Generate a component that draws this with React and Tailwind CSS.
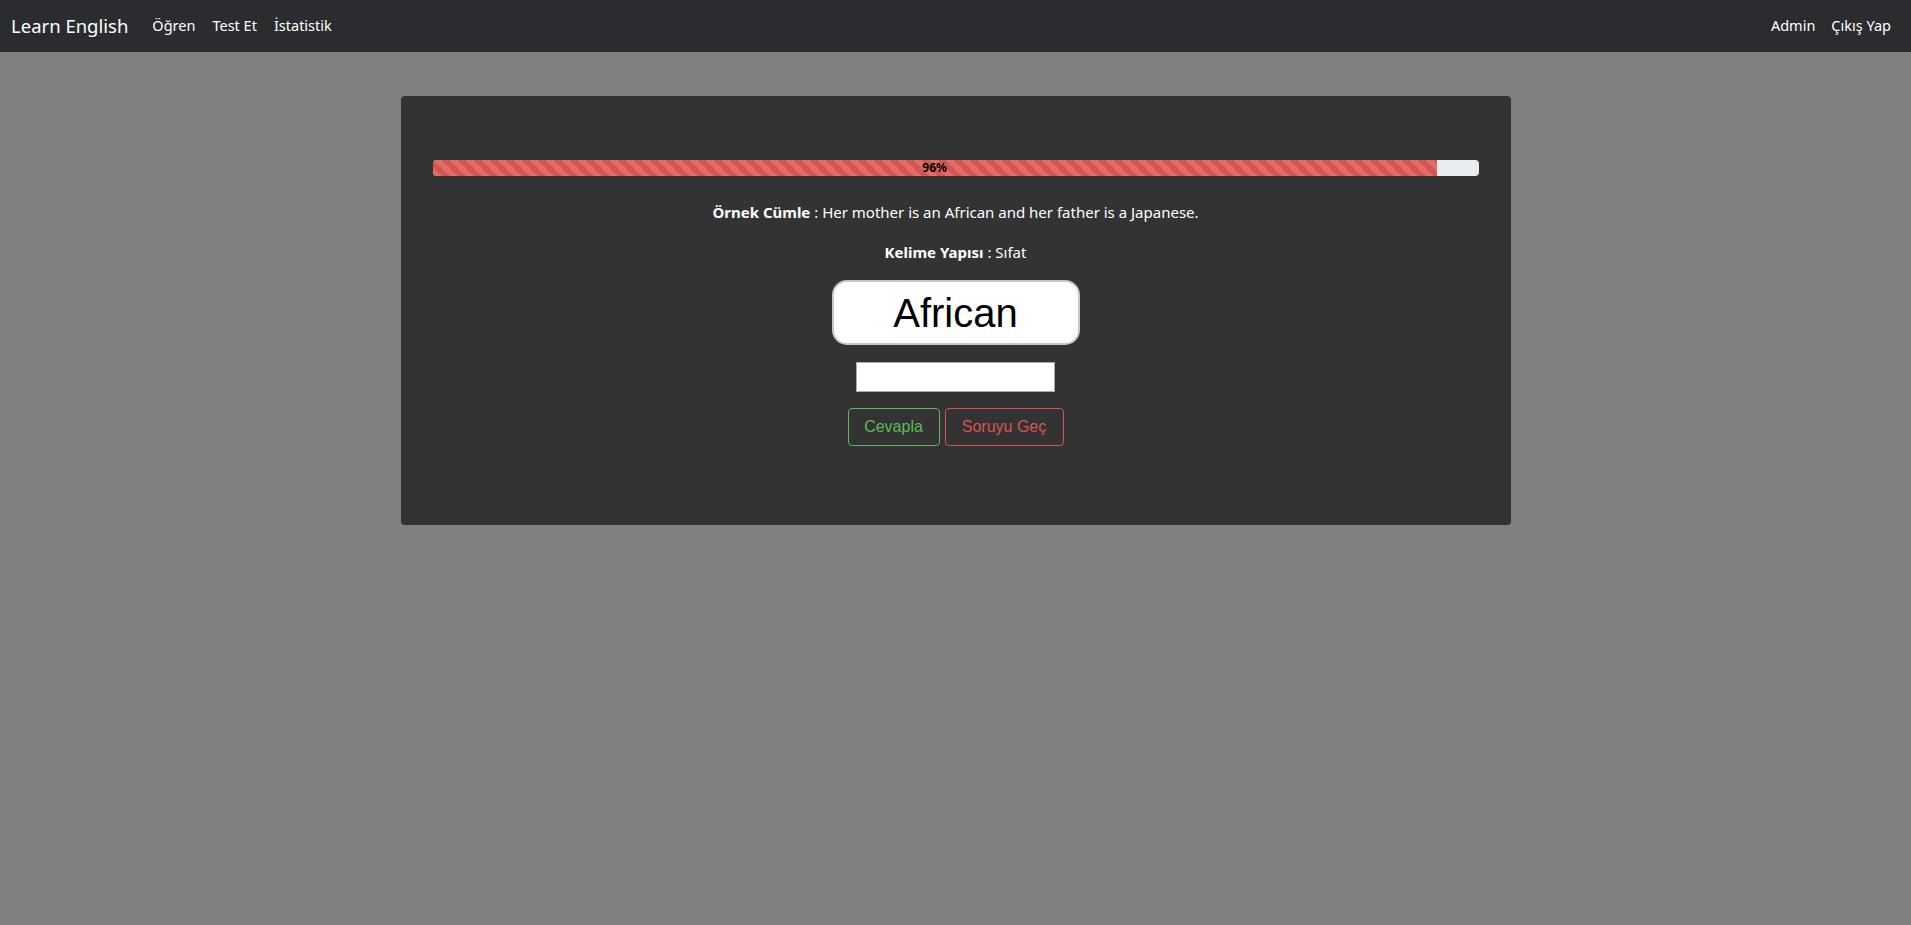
import React from 'react';

const stripes =
  'bg-[linear-gradient(45deg,rgba(255,255,255,.15)_25%,transparent_25%,transparent_50%,rgba(255,255,255,.15)_50%,rgba(255,255,255,.15)_75%,transparent_75%,transparent)] bg-[length:16px_16px]';

export default function App() {
  const [answer, setAnswer] = React.useState('');
  const percent = 96;

  return (
    <div className="min-h-screen bg-[#808080] font-['Noto_Sans',sans-serif]">
      <nav className="h-[52px] bg-[#2b2c2f] flex items-center justify-between pl-[11px] pr-[20px] text-white">
        <div className="flex items-center">
          <span className="text-[18.5px] mr-[24px]">Learn English</span>
          <div className="flex gap-[17px] text-[14.5px]">
            <a href="#">Öğren</a>
            <a href="#">Test Et</a>
            <a href="#">İstatistik</a>
          </div>
        </div>
        <div className="flex gap-[16px] text-[14.5px]">
          <a href="#">Admin</a>
          <a href="#">Çıkış Yap</a>
        </div>
      </nav>

      <div className="w-[1110px] mx-auto mt-[44px] bg-[#333333] rounded-[4px] px-[32px] pt-[64px] pb-[79px]">
        <div className="h-[16px] bg-[#e9ecef] rounded-[4px] overflow-hidden flex">
          <div
            className={`h-full bg-[#d9534f] ${stripes} flex items-center justify-center text-[12px] font-bold text-black`}
            style={{ width: `${percent}%` }}
          >
            {percent}%
          </div>
        </div>

        <p className="mt-[24px] text-center text-white text-[15px] leading-[24px]">
          <b>Örnek Cümle</b> : Her mother is an African and her father is a Japanese.
        </p>
        <p className="mt-[16px] text-center text-white text-[15px] leading-[24px]">
          <b>Kelime Yapısı</b> : Sıfat
        </p>

        <div className="flex flex-col items-center">
          <div className="mt-[16px] w-[248px] h-[65px] bg-white rounded-[15px] border-2 border-[#c8c8c8] flex items-center justify-center font-['Liberation_Sans',sans-serif] text-[40px] text-black">
            African
          </div>
          <input
            value={answer}
            onChange={e => setAnswer(e.target.value)}
            className="mt-[17px] w-[199px] h-[30px] bg-white border border-[#a9a9a9] outline-none px-1"
          />
          <div className="mt-[16px] flex gap-[5px] font-['Liberation_Sans',sans-serif] text-[16px]">
            <button className="w-[92px] h-[38px] border border-[#5cb85c] text-[#5cb85c] rounded-[4px]">Cevapla</button>
            <button className="w-[119px] h-[38px] border border-[#d9534f] text-[#d9534f] rounded-[4px]">Soruyu Geç</button>
          </div>
        </div>
      </div>
    </div>
  );
}
